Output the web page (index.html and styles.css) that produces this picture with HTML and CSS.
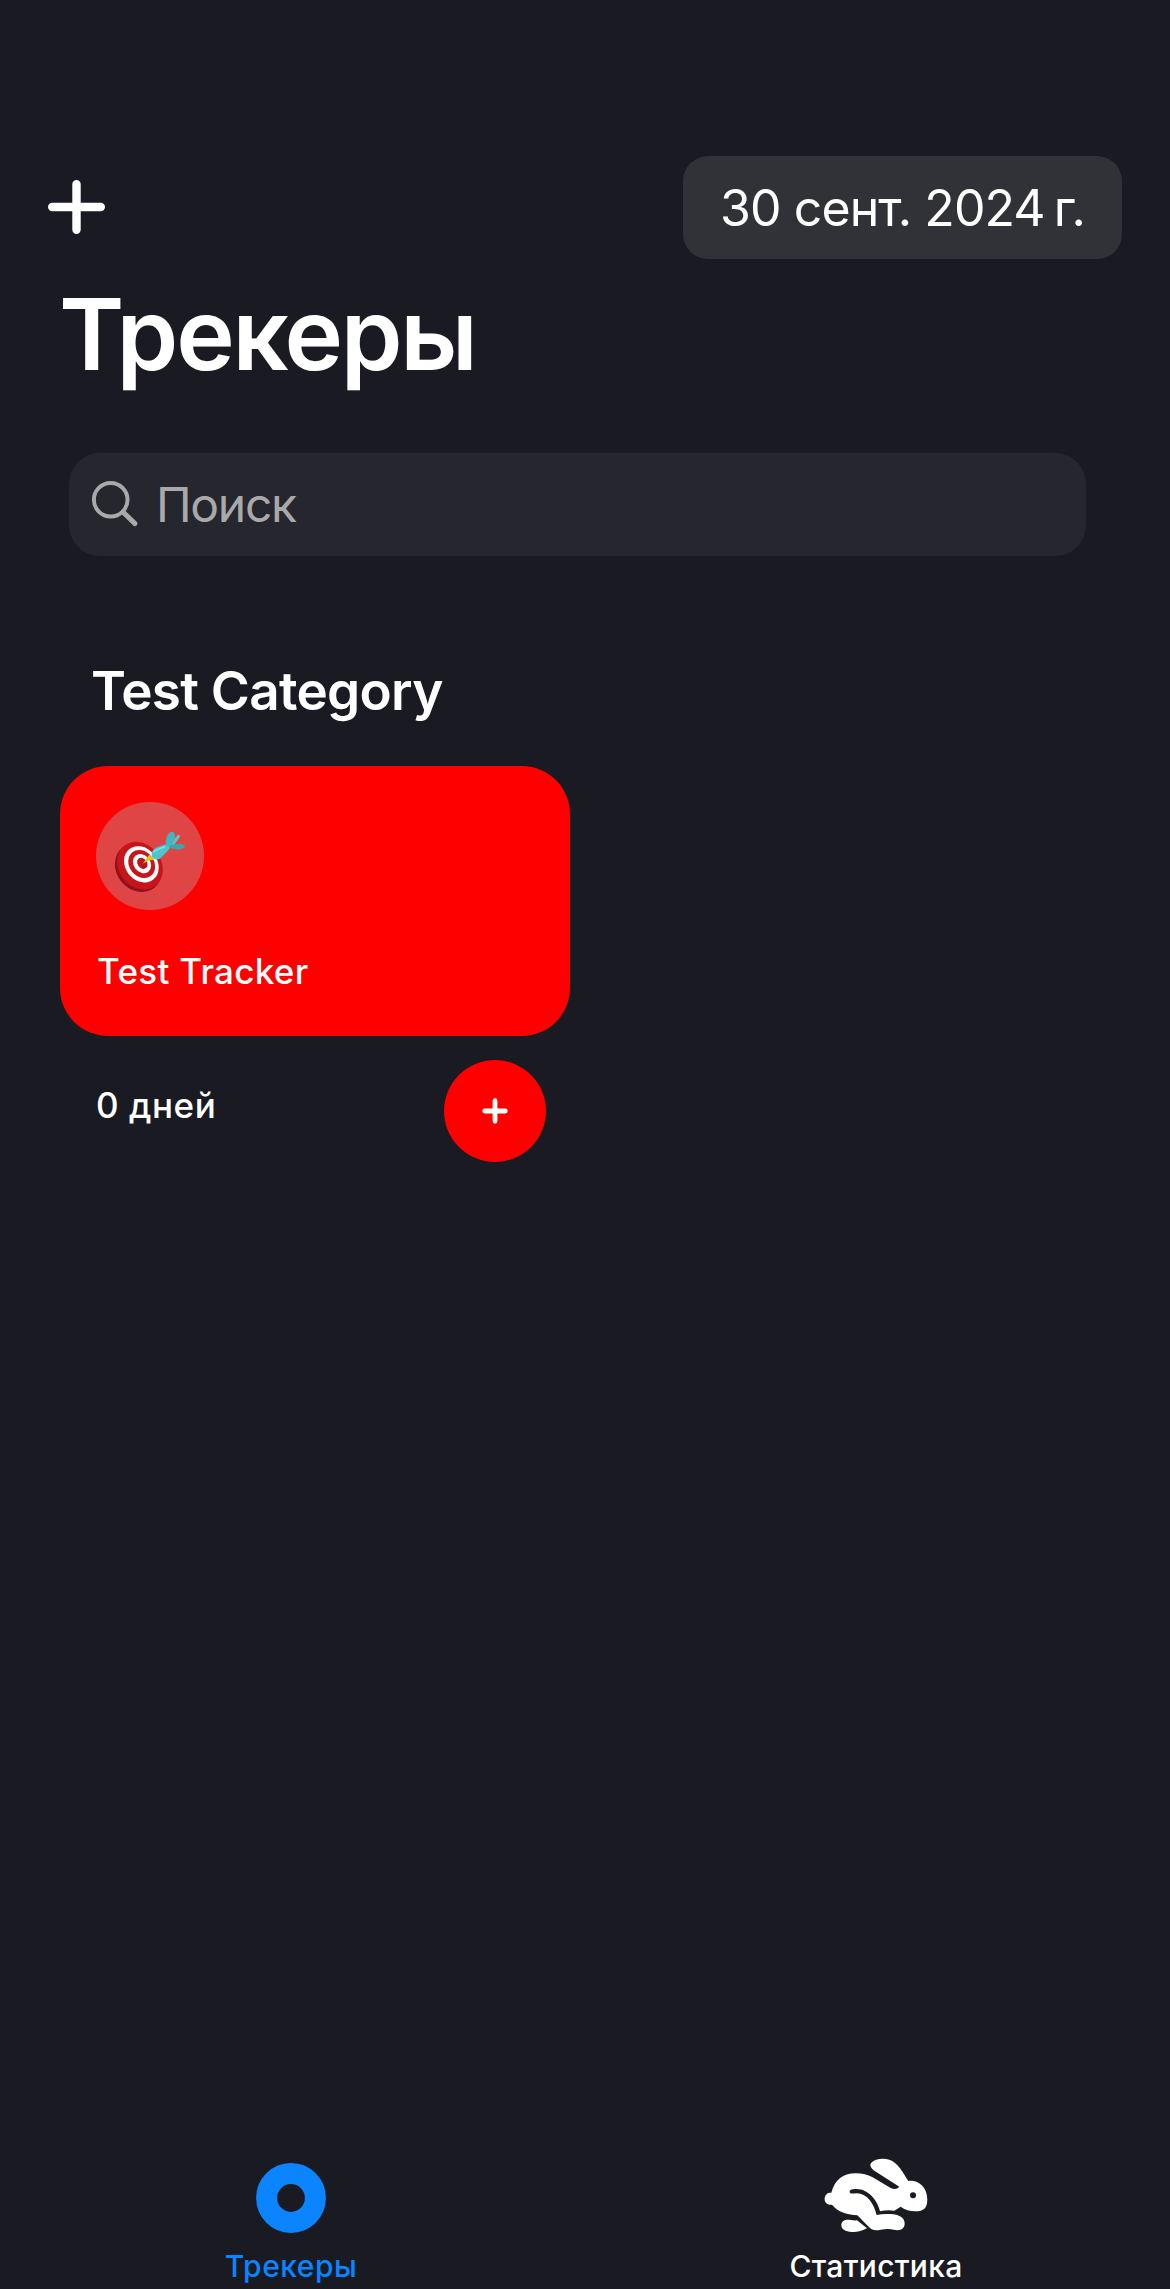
FILE: index.html
```html
<!DOCTYPE html>
<html lang="ru">
<head>
<meta charset="utf-8">
<title>Трекеры</title>
<link rel="stylesheet" href="styles.css">
</head>
<body>
<div class="screen">
  <header class="navbar">
    <button class="add" aria-label="Добавить">
      <svg width="57" height="54" viewBox="0 0 57 54"><path d="M4.2 27H52.8M28.5 4.2V49.8" stroke="#fff" stroke-width="8.4" stroke-linecap="round"/></svg>
    </button>
    <div class="date"><span>30 сент. 2024<i class="thin"></i>г.</span></div>
  </header>
  <h1 class="title"><span>Трекеры</span></h1>
  <div class="search">
    <svg class="glass" width="48" height="48" viewBox="0 0 48 48" fill="none" stroke="#a9a9aa"><circle cx="19.7" cy="19.7" r="16.8" stroke-width="4"/><path d="M32 32L44 43.6" stroke-width="5" stroke-linecap="round"/></svg>
    <span class="placeholder">Поиск</span>
  </div>
  <main class="content">
    <h2 class="category"><span>Test Category</span></h2>
    <article class="tracker">
      <div class="card">
        <div class="emoji">
          <svg width="108" height="108" viewBox="0 0 324 324">
            <g transform="translate(-48 -36)">
              <ellipse cx="175" cy="233" rx="66" ry="77" transform="rotate(-38 175 233)" fill="#8d1219"/>
              <ellipse cx="180" cy="227" rx="64" ry="76" transform="rotate(-38 180 227)" fill="#c8151c"/>
              <ellipse cx="184" cy="223" rx="48" ry="58" transform="rotate(-38 184 223)" fill="#fff"/>
              <ellipse cx="185" cy="222" rx="37" ry="45" transform="rotate(-38 185 222)" fill="#c8151c"/>
              <ellipse cx="186" cy="221" rx="25" ry="31" transform="rotate(-38 186 221)" fill="#fff"/>
              <ellipse cx="187" cy="220" rx="14" ry="18" transform="rotate(-38 187 220)" fill="#b9161d"/>
              <path d="M188 221L208 194L224 209L207 211Z" fill="#e8c515"/>
              <path d="M270 160L294 134Q301 133 300 141L279 169Z" fill="#69bcc4"/>
              <path d="M215 190Q217 176 234 170L257 163L272 172L259 187L240 206Q225 212 216 202Z" fill="#4cc5cc"/>
              <path d="M257 165Q256 138 270 127Q278 122 284 130Q288 148 271 170Z" fill="#43b5be"/>
              <path d="M265 170Q289 155 313 165Q318 170 306 177Q284 182 265 170Z" fill="#38a8b0"/>
              <path d="M222 185Q237 175 253 171" stroke="#83e3e6" stroke-width="5" fill="none" stroke-linecap="round"/>
            </g>
          </svg>
        </div>
        <p class="name"><span>Test Tracker</span></p>
      </div>
      <div class="footer">
        <span class="days">0 дней</span>
        <button class="done" aria-label="Отметить">
          <svg width="26" height="26" viewBox="0 0 26 26"><path d="M2.7 13H23.3M13 2.7V23.3" stroke="#fff" stroke-width="4.8" stroke-linecap="round"/></svg>
        </button>
      </div>
    </article>
  </main>
  <nav class="tabs">
    <a class="tab active">
      <svg class="tabicon" width="106" height="76" viewBox="0 0 106 76"><circle cx="53" cy="40" r="24.4" fill="none" stroke="#0a84ff" stroke-width="21"/></svg>
      <span class="tablabel one">Трекеры</span>
    </a>
    <a class="tab">
      <svg class="tabicon" width="106" height="76" viewBox="73 53 318 228" fill="#fff">
        <path d="M98 157C108 120 132 99 171 99C191 99 207 103 222 111L276 143Q292 151 302 139L234 96C216 85 211 74 218 67C229 55 253 52 272 58C297 66 312 95 329 122C359 118 386 140 386 178Q386 206 367 211C346 215 322 212 306 199L287 211Q265 208 244 213C237 180 209 146 173 146C158 145 151 150 153 156C155 162 164 159 174 159C207 160 225 190 234 224Q249 220 274 221C303 222 318 233 318 249C318 268 303 272 285 268Q269 264 246 268C227 272 218 268 207 256L176 225C147 223 120 217 100 193C85 195 77 186 78 174C79 162 87 156 98 157Z"/>
        <circle cx="343" cy="165" r="9" fill="#1a1b22"/>
        <path d="M175 240L205 264Q184 276 160 275C139 274 128 266 128 254C128 239 143 236 157 239Q166 241 175 240Z"/>
      </svg>
      <span class="tablabel two">Статистика</span>
    </a>
  </nav>
</div>
</body>
</html>
```
FILE: styles.css
```css
* { box-sizing: border-box; margin: 0; padding: 0; }
body { background: #1a1b22; color: #fff; font-family: Inter, "Liberation Sans", sans-serif; }
button { border: 0; background: none; display: flex; align-items: center; justify-content: center; }
svg { display: block; flex: none; }
.screen { width: 1170px; height: 2289px; display: flex; flex-direction: column; overflow: hidden; }
.navbar { margin-top: 156px; height: 103px; padding: 0 48px; display: flex; justify-content: space-between; align-items: center; }
.add { margin-bottom: 2px; }
.date { width: 439px; height: 103px; border-radius: 25px; background: #313138; padding-left: 37px; display: flex; align-items: center; font-size: 50px; line-height: 60px; letter-spacing: -0.9px; white-space: nowrap; }
.thin { display: inline-block; width: 9px; }
.title { margin: 15px 0 0 59px; height: 120px; font-size: 99px; line-height: 120px; font-weight: 600; letter-spacing: -2.2px; }
.search { margin: 59px 84px 0 69px; height: 103px; border-radius: 31px; background: #25262e; padding-left: 22px; display: flex; align-items: center; }
.glass { margin-bottom: 2px; }
.placeholder { margin-left: 17px; font-size: 48px; line-height: 60px; letter-spacing: -1.3px; color: #a9a9aa; }
.content { flex: 1; padding: 104px 60px 0; }
.category { margin-left: 31px; height: 62px; font-size: 53px; line-height: 62px; font-weight: 600; letter-spacing: -0.7px; }
.tracker { margin-top: 44px; width: 510px; }
.card { height: 270px; border-radius: 48px; background: #f00; padding: 36px; }
.emoji { width: 108px; height: 108px; border-radius: 50%; background: #df4545; }
.name { margin-top: 40px; padding-left: 1px; font-size: 35px; line-height: 42px; font-weight: 500; letter-spacing: 0.3px; }
.footer { margin-top: 24px; padding: 0 24px 0 36px; display: flex; justify-content: space-between; }
.days { margin-top: 24px; font-size: 35px; line-height: 42px; font-weight: 500; letter-spacing: 0.55px; }
.done { width: 102px; height: 102px; border-radius: 50%; background: #f00; }
.tabs { height: 131px; display: grid; grid-template-columns: 582px 588px; }
.tab { display: flex; flex-direction: column; align-items: center; }
.tablabel { margin-top: 14px; font-size: 30px; line-height: 36px; font-weight: 500; white-space: nowrap; }
.one { letter-spacing: 0.5px; }
.two { letter-spacing: 0.3px; }
.active { color: #0a84ff; }
```
